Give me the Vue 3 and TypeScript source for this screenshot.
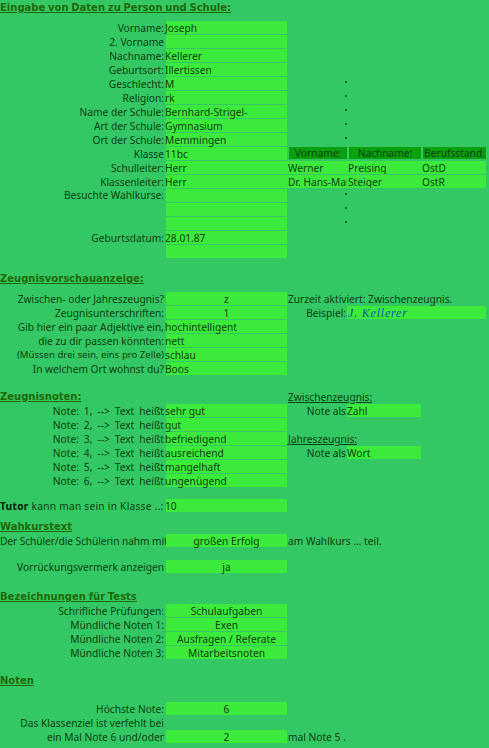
<script setup lang="ts">
interface Row {
  label?: string;
  labelCls?: string;
  value?: string;
  center?: boolean;
  noCell?: boolean;
  rightText?: string;
  rightHead?: string;
  dot?: boolean;
  pair?: [string, string];
  tableHead?: string[];
  tableRow?: string[];
  signature?: string;
}
const person: Row[] = [
  { label: "Vorname:", value: "Joseph" },
  { label: "2. Vorname", value: "" },
  { label: "Nachname:", value: "Kellerer" },
  { label: "Geburtsort:", value: "Illertissen" },
  { label: "Geschlecht:", value: "M", dot: true },
  { label: "Religion:", value: "rk", dot: true },
  { label: "Name der Schule:", value: "Bernhard-Strigel-", dot: true },
  { label: "Art der Schule:", value: "Gymnasium", dot: true },
  { label: "Ort der Schule:", value: "Memmingen", dot: true },
  { label: "Klasse", value: "11bc", tableHead: ["Vorname:", "Nachname:", "Berufsstand:"] },
  { label: "Schulleiter:", value: "Herr", tableRow: ["Werner", "Preising", "OstD"] },
  { label: "Klassenleiter:", value: "Herr", tableRow: ["Dr. Hans-Martin", "Steiger", "OstR"] },
  { label: "Besuchte Wahlkurse:", labelCls: "lift", value: "", dot: true },
  { value: "", dot: true },
  { value: "", dot: true },
  { label: "Geburtsdatum:", value: "28.01.87" },
  { value: "" },
];
const preview: Row[] = [
  { label: "Zwischen- oder Jahreszeugnis?", value: "z", center: true, rightText: "Zurzeit aktiviert: Zwischenzeugnis." },
  { label: "Zeugnisunterschriften:", value: "1", center: true, signature: "J. Kellerer" },
  { label: "Gib hier ein paar Adjektive ein,", value: "hochintelligent" },
  { label: "die zu dir passen könnten:", value: "nett" },
  { label: "(Müssen drei sein, eins pro Zelle)", labelCls: "small", value: "schlau" },
  { label: "In welchem Ort wohnst du?", value: "Boos" },
];
const grades: Row[] = [
  { label: "Note: 1, --> Text heißt", labelCls: "spaced", value: "sehr gut", pair: ["Note als", "Zahl"] },
  { label: "Note: 2, --> Text heißt", labelCls: "spaced", value: "gut" },
  { label: "Note: 3, --> Text heißt", labelCls: "spaced", value: "befriedigend", rightHead: "Jahreszeugnis:" },
  { label: "Note: 4, --> Text heißt", labelCls: "spaced", value: "ausreichend", pair: ["Note als", "Wort"] },
  { label: "Note: 5, --> Text heißt", labelCls: "spaced", value: "mangelhaft" },
  { label: "Note: 6, --> Text heißt", labelCls: "spaced", value: "ungenügend" },
];
const tests: Row[] = [
  { label: "Schrifliche Prüfungen:", value: "Schulaufgaben", center: true },
  { label: "Mündliche Noten 1:", value: "Exen", center: true },
  { label: "Mündliche Noten 2:", value: "Ausfragen / Referate", center: true },
  { label: "Mündliche Noten 3:", value: "Mitarbeitsnoten", center: true },
];
const marks: Row[] = [
  { label: "Höchste Note:", value: "6", center: true },
  { label: "Das Klassenziel ist verfehlt bei", noCell: true },
  { label: "ein Mal Note 6 und/oder", value: "2", center: true, rightText: "mal Note 5 ." },
];
const sections: { title: string; cls: string; aside?: string; rows: Row[] }[] = [
  { title: "Eingabe von Daten zu Person und Schule:", cls: "s-person", rows: person },
  { title: "Zeugnisvorschauanzeige:", cls: "s-preview", rows: preview },
  { title: "Zeugnisnoten:", cls: "s-grades", aside: "Zwischenzeugnis:", rows: grades },
];
const tail: { title: string; cls: string; rows: Row[] }[] = [
  { title: "Bezeichnungen für Tests", cls: "s-tests", rows: tests },
  { title: "Noten", cls: "s-marks", rows: marks },
];
</script>

<template>
  <main class="sheet">
    <section v-for="s in sections" :key="s.title" :class="s.cls">
      <div class="row">
        <h2 class="head">{{ s.title }}</h2>
        <span v-if="s.aside" class="sub">{{ s.aside }}</span>
      </div>
      <div v-for="(r, i) in s.rows" :key="i" class="row">
        <span class="label" :class="r.labelCls">{{ r.label }}</span>
        <span v-if="!r.noCell" class="cell" :class="{ center: r.center }"><span class="val">{{ r.value }}</span></span>
        <span v-else></span>
        <div class="right">
          <i v-if="r.dot" class="dot"></i>
          <span v-if="r.rightText" class="rtext">{{ r.rightText }}</span>
          <span v-if="r.rightHead" class="sub">{{ r.rightHead }}</span>
          <div v-if="r.tableHead" class="table">
            <span v-for="h in r.tableHead" :key="h" class="th">{{ h }}</span>
          </div>
          <div v-if="r.tableRow" class="table body">
            <span v-for="c in r.tableRow" :key="c" class="td">{{ c }}</span>
          </div>
          <div v-if="r.pair" class="pair">
            <span class="plabel">{{ r.pair[0] }}</span>
            <span class="pcell">{{ r.pair[1] }}</span>
          </div>
          <div v-if="r.signature" class="pair sig">
            <span class="plabel">Beispiel:</span>
            <span class="pcell sigcell">{{ r.signature }}</span>
          </div>
        </div>
      </div>
    </section>

    <div class="row tutor">
      <span class="label left wider"><b class="strong">Tutor</b> kann man sein in Klasse ..:</span>
      <span class="cell"><span class="val">10</span></span>
    </div>

    <section class="s-course">
      <div class="row"><h2 class="head">Wahkurstext</h2></div>
      <div class="row">
        <span class="label left tight">Der Schüler/die Schülerin nahm mit</span>
        <span class="cell center">großen Erfolg</span>
        <div class="right"><span class="rtext">am Wahlkurs ... teil.</span></div>
      </div>
      <div class="row promote">
        <span class="label">Vorrückungsvermerk anzeigen</span>
        <span class="cell center">ja</span>
      </div>
    </section>

    <section v-for="s in tail" :key="s.title" :class="s.cls">
      <div class="row"><h2 class="head">{{ s.title }}</h2></div>
      <div v-for="(r, i) in s.rows" :key="i" class="row">
        <span class="label">{{ r.label }}</span>
        <span v-if="!r.noCell" class="cell center">{{ r.value }}</span>
        <span v-else></span>
        <div class="right"><span v-if="r.rightText" class="rtext">{{ r.rightText }}</span></div>
      </div>
    </section>
  </main>
</template>

<style>
html, body { margin: 0; background: #33c864; }
</style>

<style scoped>
.sheet {
  width: 489px;
  height: 748px;
  overflow: hidden;
  box-sizing: border-box;
  padding-top: 1px;
  background: #33c864;
  color: #0b400f;
  font-family: "Noto Sans", "Liberation Sans", sans-serif;
  font-size: 10.2px;
}
.row {
  display: grid;
  grid-template-columns: 166px 121px 202px;
  height: 14px;
  line-height: 14px;
  white-space: nowrap;
}
.head {
  grid-column: 1 / 3;
  margin: 0;
  font-family: "DejaVu Sans", sans-serif;
  font-size: 10px;
  font-weight: 700;
  line-height: 14px;
  word-spacing: -0.7px;
  color: #1f6a06;
  text-decoration: underline;
}
.sub {
  padding-left: 1px;
  color: #0b400f;
  text-decoration: underline;
}
.label {
  padding-right: 2px;
  overflow: hidden;
  text-align: right;
}
.label.left { padding-right: 1px; text-align: left; }
.label.small { font-size: 9.6px; }
.label.spaced { word-spacing: 2.3px; }
.label.lift { line-height: 12px; }
.label.wider { letter-spacing: 0.25px; }
.label.tight { letter-spacing: -0.08px; }
.strong { color: #04200a; }
.cell {
  height: 13px;
  background: #3cea3c;
}
.cell.center { text-align: center; }
.val { margin-left: -1px; }
.center .val { margin-left: 0; }
.right { min-width: 0; }
.rtext { padding-left: 1px; }
.dot {
  display: block;
  width: 2px;
  height: 2px;
  margin: 4px 0 0 58px;
  background: #1b6a2c;
}
.table {
  display: grid;
  grid-template-columns: 60px 74px 65px;
  width: 199px;
  height: 13px;
}
.th {
  margin-left: 2px;
  height: 12px;
  line-height: 13px;
  background: #0aa00e;
  text-align: center;
}
.body { background: #3cea3c; }
.td {
  padding-left: 1px;
  overflow: hidden;
}
.pair {
  display: grid;
  grid-template-columns: 60px 74px;
}
.plabel { padding-right: 1px; text-align: right; }
.pcell {
  height: 13px;
  background: #3cea3c;
}
.sig { grid-template-columns: 60px 139px; }
.sigcell {
  padding-left: 1px;
  font-family: "Liberation Serif", serif;
  font-style: italic;
  font-size: 12px;
  letter-spacing: 0.8px;
  color: #0d58ad;
}
.s-person > .row:first-child { margin-bottom: 6px; }
.s-preview { margin-top: 5px; padding-top: 8px; }
.s-preview > .row:first-child { margin-bottom: 6px; }
.s-grades { margin-top: 14px; }
.tutor { margin-top: 11px; }
.s-course { margin-top: 7px; }
.promote { margin-top: 12px; }
.s-tests { margin-top: 16px; }
.s-marks { margin-top: 14px; }
.s-marks > .row:first-child { margin-bottom: 14px; }
</style>
